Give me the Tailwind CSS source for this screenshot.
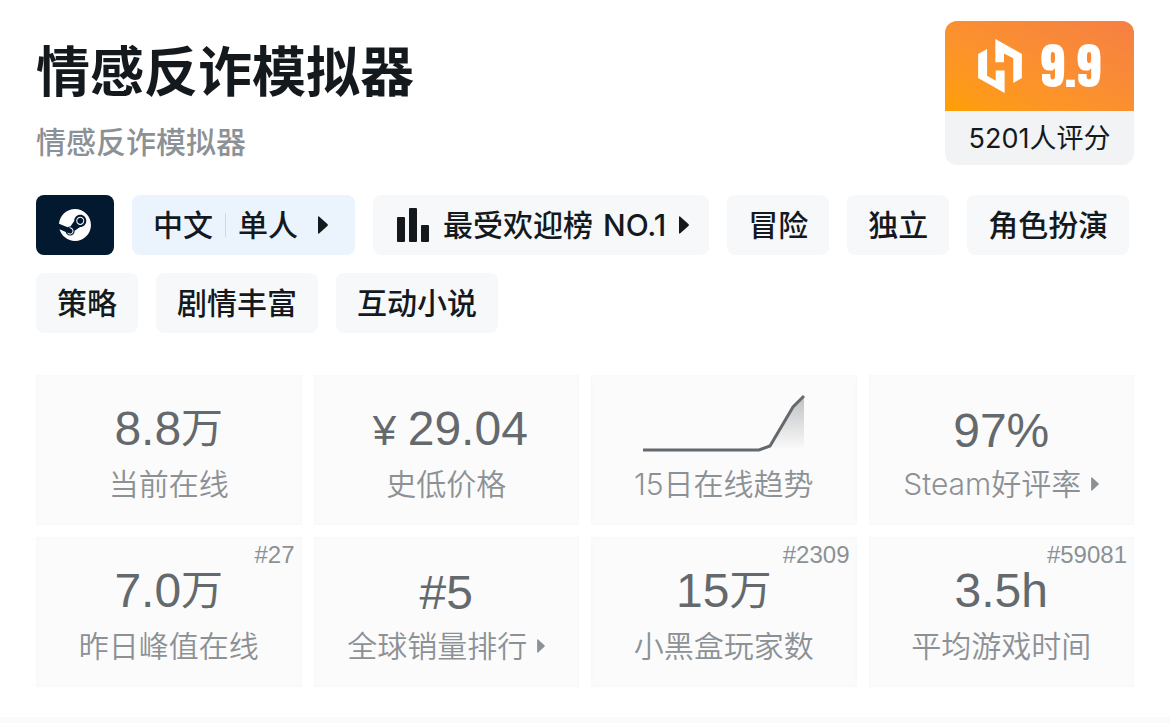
<!DOCTYPE html>
<html lang="zh-CN">
<head>
  <meta charset="UTF-8" />
  <meta name="viewport" content="width=device-width, initial-scale=1.0" />
  <title>情感反诈模拟器</title>
  <script src="https://cdn.jsdelivr.net/npm/@tailwindcss/browser@4"></script>
</head>
<body class="bg-white font-['Inter','Noto_Sans_CJK_SC',sans-serif] text-[#14191e]">

  <main class="px-9 pt-[21px] pb-[30px]">

    <!-- Title and score -->
    <header class="flex items-start justify-between">
      <div class="pt-[18px]">
        <h1 class="text-[54px] leading-[68px] font-bold">情感反诈模拟器</h1>
        <p class="mt-4 text-[30px] leading-[38px] font-medium text-[#8c9196]">情感反诈模拟器</p>
      </div>
      <a href="#" class="w-[189px] overflow-hidden rounded-xl bg-[#f1f3f5]">
        <div class="flex h-[90px] items-center justify-center gap-[18px] bg-linear-to-tr from-[#ff9f00] to-[#f67f43]">
          <svg class="h-[54px] w-11" viewBox="141 86 132 163" fill="#fff" aria-hidden="true">
            <path d="M141 131l27-15v81l26 15v-31h27v68l-80-45z" />
            <path d="M193 86l80 45v73l-26 15v-75l-28-14v26h-26z" />
          </svg>
          <span class="font-['Impact','Anton','Roboto_Condensed','Open_Sans_Condensed','Liberation_Sans',sans-serif] text-[50px] leading-[60px] font-normal text-white">9.9</span>
        </div>
        <p class="h-[54px] text-center text-[27px] leading-[56px]">5201人评分</p>
      </a>
    </header>

    <!-- Tags -->
    <nav class="mt-[30px] flex flex-wrap gap-[18px] text-[30px] leading-[60px] font-medium">
      <a href="#" aria-label="Steam" class="flex h-[60px] w-[78px] items-center justify-center rounded-lg bg-[#03192f]">
        <svg class="size-8" viewBox="0 0 24 24" fill="#fff" aria-hidden="true">
          <path d="M11.979 0C5.678 0 .511 4.86.022 11.037l6.432 2.658c.545-.371 1.203-.59 1.912-.59.063 0 .125.004.188.006l2.861-4.142V8.91c0-2.495 2.028-4.524 4.524-4.524 2.494 0 4.524 2.031 4.524 4.527s-2.03 4.525-4.524 4.525h-.105l-4.076 2.911c0 .052.004.105.004.159 0 1.875-1.515 3.396-3.39 3.396-1.635 0-3.016-1.173-3.331-2.727L.436 15.27C1.862 20.307 6.486 24 11.979 24c6.627 0 11.999-5.373 11.999-12S18.605 0 11.979 0zM7.54 18.21l-1.473-.61c.262.543.714.999 1.314 1.25 1.297.539 2.793-.076 3.332-1.375.263-.63.264-1.319.005-1.949s-.75-1.121-1.377-1.383c-.624-.26-1.29-.249-1.878-.03l1.523.63c.956.4 1.409 1.5 1.009 2.455-.397.957-1.497 1.41-2.454 1.012H7.54zm11.415-9.303c0-1.662-1.353-3.015-3.015-3.015-1.665 0-3.015 1.353-3.015 3.015 0 1.665 1.35 3.015 3.015 3.015 1.663 0 3.015-1.35 3.015-3.015zm-5.273-.005c0-1.252 1.013-2.266 2.265-2.266 1.249 0 2.266 1.014 2.266 2.266 0 1.251-1.017 2.265-2.266 2.265-1.253 0-2.265-1.014-2.265-2.265z" />
        </svg>
      </a>
      <button type="button" class="flex h-[60px] items-center rounded-lg bg-[#ebf4fc] pr-[27px] pl-[21px]">
        <span>中文</span>
        <span class="mx-3 h-6 w-px bg-[#d0d9e1]"></span>
        <span>单人</span>
        <svg class="ml-5 h-[18px] w-[10px]" viewBox="0 0 10 18" fill="currentColor" aria-hidden="true">
          <path d="M0 1.2Q0-.4 1.3.7L9.4 8.1Q10.300 9 9.400 9.900L1.300 17.300Q0 18.400 0 16.800z" />
        </svg>
      </button>
      <button type="button" class="flex h-[60px] items-center rounded-lg bg-[#f6f8fa] pr-5 pl-6">
        <svg class="mr-[14px] h-[34px] w-8" viewBox="0 0 32 34" fill="currentColor" aria-hidden="true">
          <rect x="0" y="9" width="8" height="25" rx="1" />
          <rect x="12" y="0" width="8" height="34" rx="1" />
          <rect x="24" y="17" width="8" height="17" rx="1" />
        </svg>
        <span>最受欢迎榜</span>
        <span class="ml-[10px]">NO.1</span>
        <svg class="ml-[13px] h-[18px] w-[10px]" viewBox="0 0 10 18" fill="currentColor" aria-hidden="true">
          <path d="M0 1.2Q0-.4 1.3.7L9.4 8.1Q10.300 9 9.400 9.900L1.300 17.300Q0 18.400 0 16.800z" />
        </svg>
      </button>
      <a href="#" class="h-[60px] rounded-lg bg-[#f6f8fa] px-[21px]">冒险</a>
      <a href="#" class="h-[60px] rounded-lg bg-[#f6f8fa] px-[21px]">独立</a>
      <a href="#" class="h-[60px] rounded-lg bg-[#f6f8fa] px-[21px]">角色扮演</a>
      <a href="#" class="h-[60px] rounded-lg bg-[#f6f8fa] px-[21px]">策略</a>
      <a href="#" class="h-[60px] rounded-lg bg-[#f6f8fa] px-[21px]">剧情丰富</a>
      <a href="#" class="h-[60px] rounded-lg bg-[#f6f8fa] px-[21px]">互动小说</a>
    </nav>

    <!-- Stats -->
    <section class="mt-[42px] grid grid-cols-4 gap-3 text-center text-[30px] leading-[38px] font-[350] text-[#8c9196]">
      <div class="h-[150px] border-2 border-[#f7f9fa] bg-[#fbfbfb] pt-6">
        <p class="h-14 font-['Liberation_Sans','Noto_Sans_CJK_SC',sans-serif] text-[48px] leading-[56px] font-normal text-[#64696e]">8.8<span class="align-[2px] text-[42px] leading-none">万</span></p>
        <p class="mt-2">当前在线</p>
      </div>
      <div class="h-[150px] border-2 border-[#f7f9fa] bg-[#fbfbfb] pt-6">
        <p class="h-14 pl-2 font-['Liberation_Sans','Noto_Sans_CJK_SC',sans-serif] text-[48px] leading-[56px] font-normal text-[#64696e]"><span class="text-[42px] leading-none">¥ </span>29.04</p>
        <p class="mt-2">史低价格</p>
      </div>
      <div class="h-[150px] border-2 border-[#f7f9fa] bg-[#fbfbfb] pt-4">
        <svg class="mx-auto h-16 w-[162px]" viewBox="0 0 162 64" fill="none" aria-hidden="true">
          <defs>
            <linearGradient id="trend" x1="0" y1="0" x2="0" y2="1">
              <stop offset="0" stop-color="#64696e" stop-opacity=".4" />
              <stop offset="1" stop-color="#64696e" stop-opacity="0" />
            </linearGradient>
          </defs>
          <path d="M116 57l11-4 23-39 11-11v54z" fill="url(#trend)" />
          <path d="M0 57h116l11-4 23-39 11-11" stroke="#64696e" stroke-width="3" />
        </svg>
        <p class="mt-2">15日在线趋势</p>
      </div>
      <a href="#" class="h-[150px] border-2 border-[#f7f9fa] bg-[#fbfbfb] pt-6">
        <p class="h-14 font-['Liberation_Sans','Noto_Sans_CJK_SC',sans-serif] text-[48px] leading-[60px] font-normal text-[#64696e]">97%</p>
        <p class="mt-2 flex items-center justify-center gap-[10px]">Steam好评率
          <svg class="h-[14px] w-2" viewBox="0 0 10 18" fill="currentColor" aria-hidden="true">
            <path d="M0 1.2Q0-.4 1.3.7L9.4 8.1Q10.300 9 9.400 9.900L1.300 17.300Q0 18.400 0 16.800z" />
          </svg>
        </p>
      </a>
      <div class="relative h-[150px] border-2 border-[#f7f9fa] bg-[#fbfbfb] pt-6">
        <span class="absolute top-0 right-[5px] font-['Liberation_Sans',sans-serif] text-2xl font-normal">#27</span>
        <p class="h-14 font-['Liberation_Sans','Noto_Sans_CJK_SC',sans-serif] text-[48px] leading-[56px] font-normal text-[#64696e]">7.0<span class="align-[2px] text-[42px] leading-none">万</span></p>
        <p class="mt-2">昨日峰值在线</p>
      </div>
      <a href="#" class="h-[150px] border-2 border-[#f7f9fa] bg-[#fbfbfb] pt-6">
        <p class="h-14 font-['Liberation_Sans','Noto_Sans_CJK_SC',sans-serif] text-[48px] leading-[60px] font-normal text-[#64696e]">#5</p>
        <p class="mt-2 flex items-center justify-center gap-[10px]">全球销量排行
          <svg class="h-[14px] w-2" viewBox="0 0 10 18" fill="currentColor" aria-hidden="true">
            <path d="M0 1.2Q0-.4 1.3.7L9.4 8.1Q10.300 9 9.400 9.900L1.300 17.300Q0 18.400 0 16.800z" />
          </svg>
        </p>
      </a>
      <div class="relative h-[150px] border-2 border-[#f7f9fa] bg-[#fbfbfb] pt-6">
        <span class="absolute top-0 right-[5px] font-['Liberation_Sans',sans-serif] text-2xl font-normal">#2309</span>
        <p class="h-14 font-['Liberation_Sans','Noto_Sans_CJK_SC',sans-serif] text-[48px] leading-[56px] font-normal text-[#64696e]">15<span class="align-[2px] text-[42px] leading-none">万</span></p>
        <p class="mt-2">小黑盒玩家数</p>
      </div>
      <div class="relative h-[150px] border-2 border-[#f7f9fa] bg-[#fbfbfb] pt-6">
        <span class="absolute top-0 right-[5px] font-['Liberation_Sans',sans-serif] text-2xl font-normal">#59081</span>
        <p class="h-14 font-['Liberation_Sans','Noto_Sans_CJK_SC',sans-serif] text-[48px] leading-[56px] font-normal text-[#64696e]">3.5h</p>
        <p class="mt-2">平均游戏时间</p>
      </div>
    </section>
  </main>

  <div class="h-[6px] bg-[#fafbfb]"></div>

</body>
</html>
